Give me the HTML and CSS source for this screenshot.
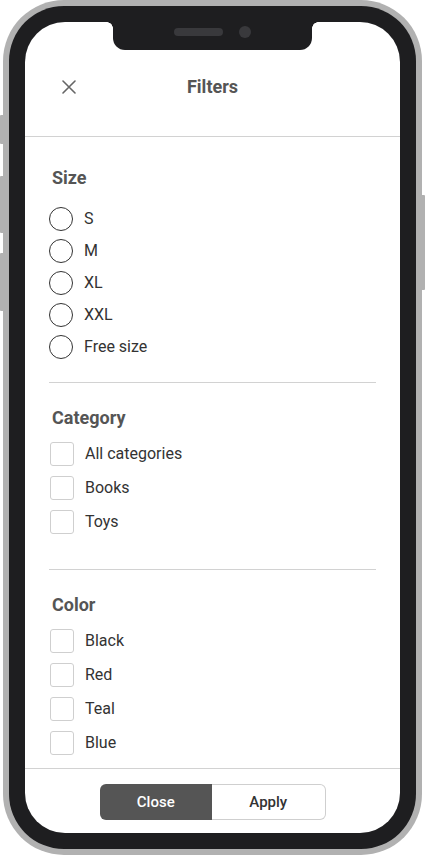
FILE: index.html
```html
<!DOCTYPE html>
<html lang="en">
<head>
<meta charset="utf-8">
<title>Filters</title>
<link rel="stylesheet" href="styles.css">
</head>
<body>
<div class="phone">
  <span class="btn btn-mute"></span>
  <span class="btn btn-volup"></span>
  <span class="btn btn-voldown"></span>
  <span class="btn btn-power"></span>
  <div class="bezel">
    <div class="screen">
      <div class="notch"><span class="speaker"></span><span class="camera"></span></div>
      <header class="header">
        <div class="header-row">
          <button class="icon-close" aria-label="Close">
            <svg width="14" height="14" viewBox="0 0 14 14"><path d="M1 1L13 13M13 1L1 13" stroke="#666" stroke-width="1.6" fill="none" stroke-linecap="round"/></svg>
          </button>
          <h1 class="title">Filters</h1>
          <span></span>
        </div>
      </header>
      <main class="content">
        <section class="section section-size">
          <h2 class="heading">Size</h2>
          <ul class="list radios">
            <li class="option"><span class="radio"></span><span class="label">S</span></li>
            <li class="option"><span class="radio"></span><span class="label">M</span></li>
            <li class="option"><span class="radio"></span><span class="label">XL</span></li>
            <li class="option"><span class="radio"></span><span class="label">XXL</span></li>
            <li class="option"><span class="radio"></span><span class="label">Free size</span></li>
          </ul>
        </section>
        <hr class="divider">
        <section class="section section-category">
          <h2 class="heading">Category</h2>
          <ul class="list checks">
            <li class="option"><span class="check"></span><span class="label">All categories</span></li>
            <li class="option"><span class="check"></span><span class="label">Books</span></li>
            <li class="option"><span class="check"></span><span class="label">Toys</span></li>
          </ul>
        </section>
        <hr class="divider">
        <section class="section section-color">
          <h2 class="heading">Color</h2>
          <ul class="list checks">
            <li class="option"><span class="check"></span><span class="label">Black</span></li>
            <li class="option"><span class="check"></span><span class="label">Red</span></li>
            <li class="option"><span class="check"></span><span class="label">Teal</span></li>
            <li class="option"><span class="check"></span><span class="label">Blue</span></li>
          </ul>
        </section>
      </main>
      <footer class="footer">
        <div class="segmented">
          <button class="seg seg-close">Close</button>
          <button class="seg seg-apply">Apply</button>
        </div>
      </footer>
    </div>
  </div>
</div>
</body>
</html>
```

FILE: styles.css
```css
* { box-sizing: border-box; }
html, body { margin: 0; padding: 0; background: #fff; }
body { font-family: Roboto, "Liberation Sans", Arial, sans-serif; }

.phone {
  position: relative;
  margin-left: 3px;
  width: 419px;
  height: 855px;
  padding: 6px;
  border-radius: 61px;
  background: #b1b1b1;
}
.btn { position: absolute; background: #b1b1b1; width: 3px; }
.btn-mute { left: -3px; top: 115px; height: 29px; border-radius: 1px 0 0 1px; }
.btn-volup { left: -3px; top: 176px; height: 57px; border-radius: 1px 0 0 1px; }
.btn-voldown { left: -3px; top: 253px; height: 58px; border-radius: 1px 0 0 1px; }
.btn-power { right: -3px; top: 195px; height: 95px; border-radius: 0 1px 1px 0; }

.bezel {
  height: 100%;
  padding: 16px;
  border-radius: 55px;
  background: #1e1e20;
}
.screen {
  position: relative;
  height: 100%;
  background: #fff;
  border-radius: 40px;
  overflow: hidden;
  display: flex;
  flex-direction: column;
}

.notch {
  position: absolute;
  top: 0;
  left: 88px;
  width: 199px;
  height: 28px;
  background: #1e1e20;
  border-radius: 0 0 12px 12px;
  display: flex;
  justify-content: center;
  align-items: flex-start;
  gap: 16px;
  padding-top: 6px;
}
.notch::before, .notch::after {
  content: "";
  position: absolute;
  top: 0;
  width: 6px;
  height: 6px;
}
.notch::before { left: -6px; background: radial-gradient(circle at 0 100%, transparent 5.5px, #1e1e20 6px); }
.notch::after { right: -6px; background: radial-gradient(circle at 100% 100%, transparent 5.5px, #1e1e20 6px); }
.speaker { width: 49px; height: 8px; border-radius: 4px; background: #39393c; }
.camera { width: 12px; height: 12px; border-radius: 50%; background: #39393c; margin-top: -2px; }

.header {
  flex: none;
  height: 115px;
  border-bottom: 1px solid #d2d2d2;
  padding-top: 43px;
}
.header-row {
  height: 44px;
  display: grid;
  grid-template-columns: 1fr auto 1fr;
  align-items: center;
}
.icon-close {
  justify-self: start;
  margin-left: 37px;
  width: 14px;
  height: 14px;
  padding: 0;
  border: 0;
  background: none;
  display: flex;
}
.title {
  margin: 0;
  font-size: 18px;
  font-weight: 700;
  color: #555;
  line-height: 24px;
}

.content {
  flex: 1;
  padding: 0 24px;
}
.section { padding-top: 23px; }
.section-size { padding-top: 29px; padding-bottom: 23px; }
.section-category { padding-bottom: 35px; }
.heading {
  margin: 0;
  padding-left: 3px;
  font-size: 18px;
  font-weight: 700;
  line-height: 24px;
  color: #555;
}
.list {
  list-style: none;
  margin: 12px 0 0;
  padding: 0;
  display: flex;
  flex-direction: column;
  gap: 10px;
}
.radios { margin-top: 17px; gap: 8px; }
.option {
  display: flex;
  align-items: center;
  height: 24px;
  gap: 11px;
}
.label { font-size: 16px; color: #333; line-height: 20px; }
.radio {
  width: 24px;
  height: 24px;
  border-radius: 50%;
  border: 1.3px solid #333;
}
.check {
  width: 24px;
  height: 24px;
  margin-left: 1px;
  border-radius: 3px;
  border: 1px solid #cfcfcf;
}
.divider {
  margin: 0;
  border: 0;
  height: 1px;
  background: #d2d2d2;
}

.footer {
  flex: none;
  height: 65px;
  border-top: 1px solid #d2d2d2;
  padding-top: 15px;
  display: flex;
  justify-content: center;
}
.segmented {
  display: flex;
  width: 226px;
  height: 36px;
}
.seg {
  flex: 1;
  font-family: Roboto, "Liberation Sans", Arial, sans-serif;
  font-size: 15px;
  font-weight: 500;
  padding: 0;
}
.seg-close {
  background: #555;
  color: #fff;
  border: 0;
  border-radius: 6px 0 0 6px;
}
.seg-apply {
  background: #fff;
  color: #333;
  border: 1px solid #cfcfcf;
  border-left: 0;
  border-radius: 0 6px 6px 0;
}
```
